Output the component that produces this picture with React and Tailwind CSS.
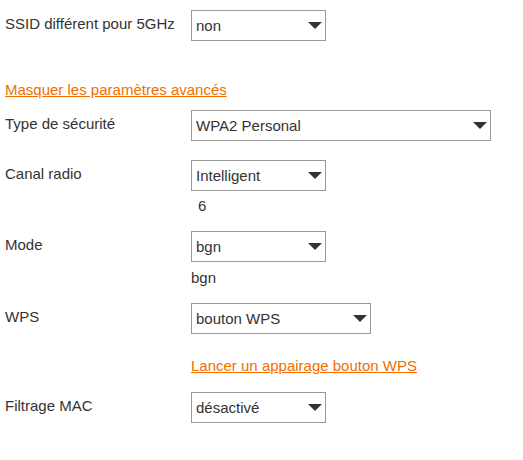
import React from "react";

function Arrow() {
  return (
    <svg width="14" height="7" viewBox="0 0 14 7" className="shrink-0">
      <polygon points="0,0 14,0 7,7" fill="#333333" />
    </svg>
  );
}

function Select({ value, width }) {
  return (
    <div
      className={`flex h-[31px] items-center justify-between border border-[#999999] bg-white pl-[4px] pr-[3px] ${width}`}
    >
      <span className="whitespace-nowrap">{value}</span>
      <Arrow />
    </div>
  );
}

function Row({ label, value, width, className = "" }) {
  return (
    <div className={`flex items-start ${className}`}>
      <div className="w-[186px] shrink-0 pt-[4px] whitespace-nowrap">{label}</div>
      <Select value={value} width={width} />
    </div>
  );
}

export default function App() {
  return (
    <div
      className="min-h-[460px] w-[523px] bg-white pl-[5px] pt-[10px] text-[15px] leading-[20px] text-[#333333]"
      style={{ fontFamily: '"Liberation Sans", Arial, sans-serif' }}
    >
      <Row label="SSID différent pour 5GHz" value="non" width="w-[135px]" />
      <div className="mt-[39px]">
        <a href="#" className="text-[#f16e00] underline">
          Masquer les paramètres avancés
        </a>
      </div>
      <Row label="Type de sécurité" value="WPA2 Personal" width="w-[300px]" className="mt-[10px]" />
      <Row label="Canal radio" value="Intelligent" width="w-[135px]" className="mt-[19px]" />
      <div className="mt-[5px] pl-[193px]">6</div>
      <Row label="Mode" value="bgn" width="w-[135px]" className="mt-[15px]" />
      <div className="mt-[6px] pl-[186px]">bgn</div>
      <Row label="WPS" value="bouton WPS" width="w-[180px]" className="mt-[15px]" />
      <div className="mt-[22px] pl-[186px]">
        <a href="#" className="text-[#f16e00] underline">
          Lancer un appairage bouton WPS
        </a>
      </div>
      <Row label="Filtrage MAC" value="désactivé" width="w-[135px]" className="mt-[16px]" />
    </div>
  );
}
